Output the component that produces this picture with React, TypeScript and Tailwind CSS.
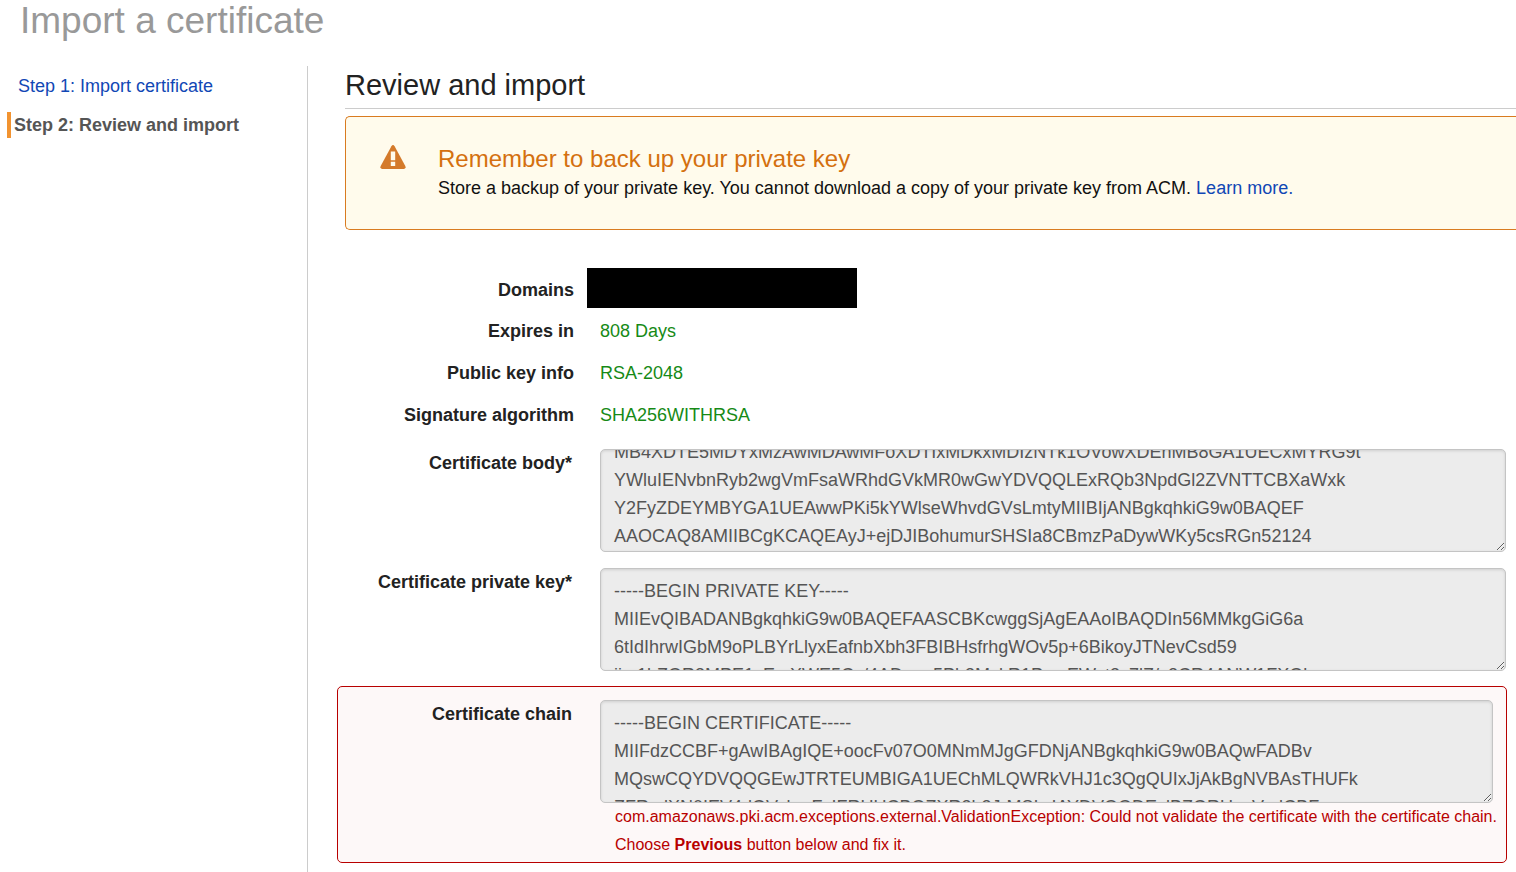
import { useEffect, useRef } from "react";

const labelClass = "text-right text-[18px] leading-7 font-bold text-[#222]";

const BODY = [
  "MB4XDTE5MDYxMzAwMDAwMFoXDTIxMDkxMDIzNTk1OVowXDEhMB8GA1UECxMYRG9t",
  "YWluIENvbnRyb2wgVmFsaWRhdGVkMR0wGwYDVQQLExRQb3NpdGl2ZVNTTCBXaWxk",
  "Y2FyZDEYMBYGA1UEAwwPKi5kYWlseWhvdGVsLmtyMIIBIjANBgkqhkiG9w0BAQEF",
  "AAOCAQ8AMIIBCgKCAQEAyJ+ejDJIBohumurSHSIa8CBmzPaDywWKy5csRGn52124",
].join("\n");

const KEY = [
  "-----BEGIN PRIVATE KEY-----",
  "MIIEvQIBADANBgkqhkiG9w0BAQEFAASCBKcwggSjAgEAAoIBAQDIn56MMkgGiG6a",
  "6tIdIhrwIGbM9oPLBYrLlyxEafnbXbh3FBIBHsfrhgWOv5p+6BikoyJTNevCsd59",
  "jjm1bZQR3MPE1sEmXWE5Cx/4ADmm5Ph3MskR1PmsEWst3s7lZ/s2CR4ANW1FXQk",
].join("\n");

const CHAIN = [
  "-----BEGIN CERTIFICATE-----",
  "MIIFdzCCBF+gAwIBAgIQE+oocFv07O0MNmMJgGFDNjANBgkqhkiG9w0BAQwFADBv",
  "MQswCQYDVQQGEwJTRTEUMBIGA1UEChMLQWRkVHJ1c3QgQUIxJjAkBgNVBAsTHUFk",
  "ZFRydXN0IEV4dGVybmFsIFRUUCBOZXR3b3JrMSIwIAYDVQQDExlBZGRUcnVzdCBF",
].join("\n");

function PemArea({ id, value, scroll = 0 }: { id: string; value: string; scroll?: number }) {
  const ref = useRef<HTMLTextAreaElement>(null);
  useEffect(() => {
    if (ref.current) ref.current.scrollTop = scroll;
  }, [scroll]);
  return (
    <textarea
      ref={ref}
      id={id}
      readOnly
      defaultValue={value}
      wrap="off"
      className="block h-[103px] w-full resize overflow-auto rounded-[5px] border border-[#c4c4c4] bg-[#ececec] px-[13px] py-2 text-[18px] leading-7 text-[#555] shadow-[inset_0_1px_3px_rgba(0,0,0,0.12)] outline-none [scrollbar-width:none]"
    />
  );
}

function Fact({ label, value }: { label: string; value: string }) {
  return (
    <div className="grid h-[42px] grid-cols-[229px_1fr] items-center gap-[26px]">
      <dt className={labelClass}>{label}</dt>
      <dd className="text-[18px] leading-7 text-[#168a16]">{value}</dd>
    </div>
  );
}

export default function App() {
  return (
    <div className="flex min-h-screen flex-col overflow-x-hidden bg-white font-['Liberation_Sans',Arial,sans-serif] text-[#222]">
      <h1 className="h-[66px] pl-5 text-[37px] leading-[42px] text-[#999]">Import a certificate</h1>
      <div className="flex grow">
        <nav className="w-[308px] shrink-0 border-r border-[#ccc] pl-[7px] text-[18px]">
          <ol>
            <li className="pt-[7px] pl-[11px] leading-[26px]">
              <a href="#step-1" className="text-[#1147b5]">Step 1: Import certificate</a>
            </li>
            <li aria-current="step" className="mt-[13px] border-l-4 border-[#f29330] pl-[3px] leading-[26px] font-bold text-[#555]">
              Step 2: Review and import
            </li>
          </ol>
        </nav>
        <main className="min-w-0 grow pl-[37px]">
          <h2 className="h-[43px] border-b border-[#ccc] text-[29px] leading-[38px]">Review and import</h2>
          <section className="mt-[7px] flex h-[114px] rounded-l-[5px] border border-r-0 border-[#d97b20] bg-[#fffbec] pt-[27px] pl-[34px]">
            <svg viewBox="0 0 26 24" className="mt-[1px] mr-8 h-6 w-[26px] shrink-0" aria-hidden="true">
              <path d="M11.4 1.2Q13-1 14.6 1.2L25.3 21Q26.3 23.5 24 24H2Q-.3 23.5.7 21Z" fill="#d47a2a" />
              <path d="M10.8 6.6h4.4v8.6h-4.4ZM10.8 16.8h4.4v4.2h-4.4Z" fill="#fffbec" />
            </svg>
            <div>
              <h3 className="text-[24px] leading-[30px] text-[#d4700f]">Remember to back up your private key</h3>
              <p className="text-[18px] leading-7 whitespace-nowrap text-[#111]">
                Store a backup of your private key. You cannot download a copy of your private key from ACM.{" "}
                <a href="#learn-more" className="text-[#1147b5]">Learn more.</a>
              </p>
            </div>
          </section>
          <dl className="mt-[38px]">
            <div className="grid h-[42px] grid-cols-[229px_1fr] gap-[13px]">
              <dt className={`${labelClass} pt-2`}>Domains</dt>
              <dd className="h-10 w-[270px] bg-black" />
            </div>
            <Fact label="Expires in" value="808 Days" />
            <Fact label="Public key info" value="RSA-2048" />
            <Fact label="Signature algorithm" value="SHA256WITHRSA" />
          </dl>
          <div className="mt-[13px] grid grid-cols-[227px_1fr] gap-7 pr-[10px]">
            <label htmlFor="body" className={labelClass}>Certificate body*</label>
            <PemArea id="body" value={BODY} scroll={20} />
          </div>
          <div className="mt-4 grid grid-cols-[227px_1fr] gap-7 pr-[10px]">
            <label htmlFor="key" className={labelClass}>Certificate private key*</label>
            <PemArea id="key" value={KEY} />
          </div>
          <div className="mt-[15px] mr-[9px] -ml-2 grid h-[177px] grid-cols-[234px_minmax(0,1fr)] gap-7 rounded-[5px] border border-[#b80000] bg-[#fdf8f8] pt-[13px] pr-[13px]">
            <label htmlFor="chain" className={labelClass}>Certificate chain</label>
            <div>
              <PemArea id="chain" value={CHAIN} />
              <p className="pl-[15px] text-[16px] leading-7 whitespace-nowrap text-[#b80000]">
                com.amazonaws.pki.acm.exceptions.external.ValidationException: Could not validate the certificate with the certificate chain.
                <br />
                Choose <strong>Previous</strong> button below and fix it.
              </p>
            </div>
          </div>
        </main>
      </div>
    </div>
  );
}
